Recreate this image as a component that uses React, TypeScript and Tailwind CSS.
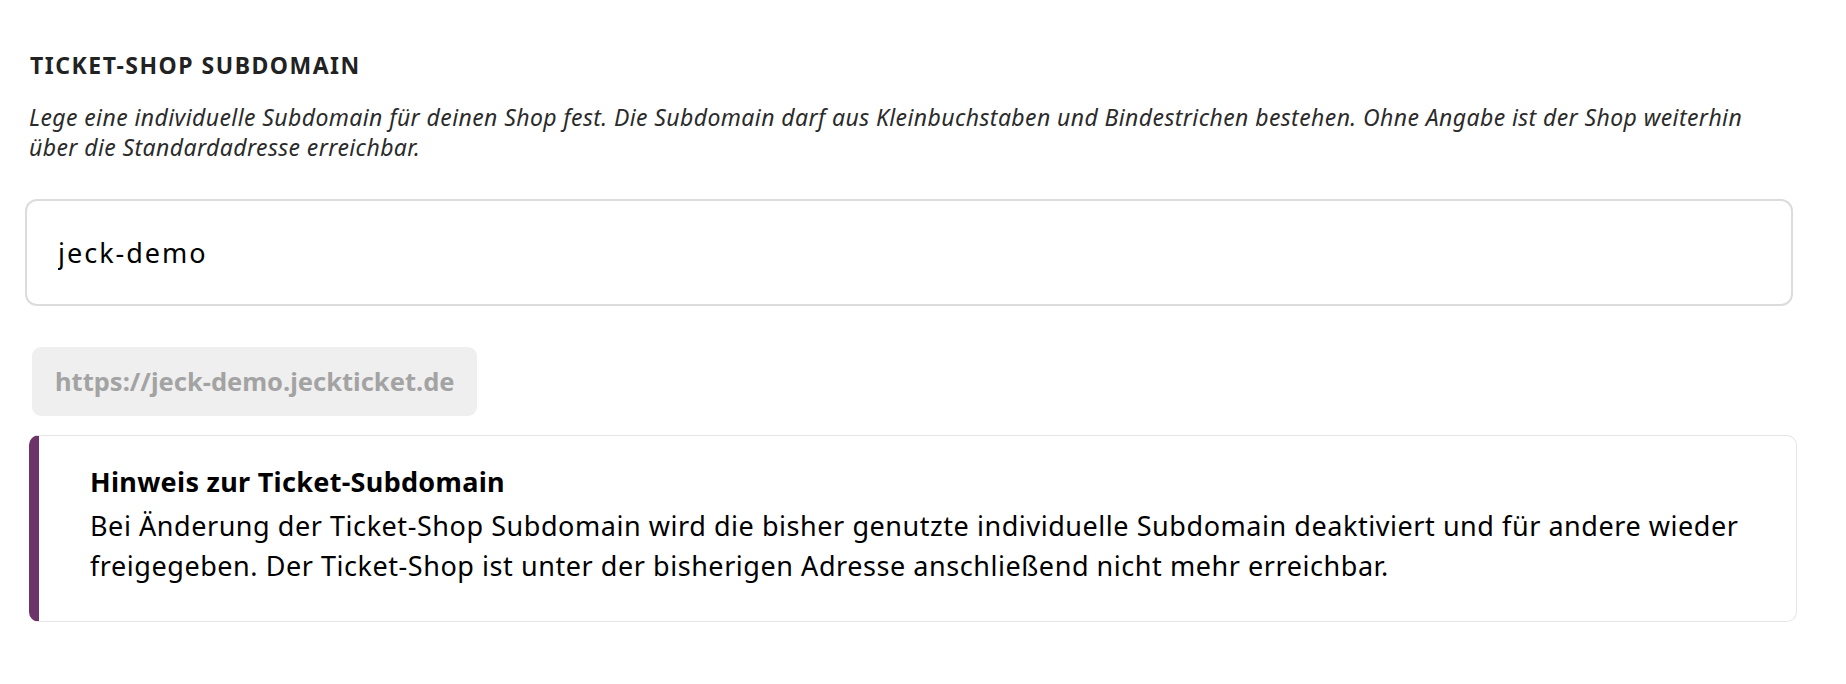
import React, { useState } from 'react';

const font = { fontFamily: '"Noto Sans", "Open Sans", sans-serif' };

export default function App() {
    const [subdomain, setSubdomain] = useState('jeck-demo');

    return (
        <div className="min-h-screen bg-white" style={font}>
            <div className="w-[1768px] ml-[29px] pt-[50px]">
                {/* Heading */}
                <h2 className="ml-[1px] text-[23px] leading-[30px] font-bold tracking-[1.5px] text-[#222222] uppercase">
                    Ticket-Shop Subdomain
                </h2>

                {/* Description */}
                <p className="mt-[22px] text-[23px] leading-[30px] italic tracking-[0.4px] text-[#2b2b2b]">
                    Lege eine individuelle Subdomain für deinen Shop fest. Die Subdomain darf aus Kleinbuchstaben und
                    Bindestrichen bestehen. Ohne Angabe ist der Shop weiterhin über die Standardadresse erreichbar.
                </p>

                {/* Input */}
                <input
                    type="text"
                    value={subdomain}
                    onChange={(e) => setSubdomain(e.target.value)}
                    className="block w-full -ml-[4px] mt-[37px] h-[107px] px-[31px] rounded-[12px] border-2 border-[#dcdcdc] bg-white text-[27px] tracking-[2px] text-black outline-none"
                    style={font}
                />

                {/* URL preview */}
                <div className="mt-[41px] ml-[3px] inline-flex items-center h-[69px] px-[23px] rounded-[9px] bg-[#efefef]">
                    <span className="text-[25.5px] font-bold text-[#a3a3a3]">
                        https://{subdomain}.jeckticket.de
                    </span>
                </div>

                {/* Notice */}
                <div className="mt-[19px] rounded-[10px] border border-[#e6e6e6] border-l-[10px] border-l-[#6c3469] pl-[51px] pr-[16px] pt-[26px] pb-[35px]">
                    <p className="text-[27px] leading-[40px] font-bold tracking-[0.3px] text-black">
                        Hinweis zur Ticket-Subdomain
                    </p>
                    <p className="mt-[4px] text-[27px] leading-[40px] tracking-[0.55px] text-black">
                        Bei Änderung der Ticket-Shop Subdomain wird die bisher genutzte individuelle Subdomain deaktiviert
                        und für andere wieder freigegeben. Der Ticket-Shop ist unter der bisherigen Adresse anschließend
                        nicht mehr erreichbar.
                    </p>
                </div>
            </div>
        </div>
    );
}
